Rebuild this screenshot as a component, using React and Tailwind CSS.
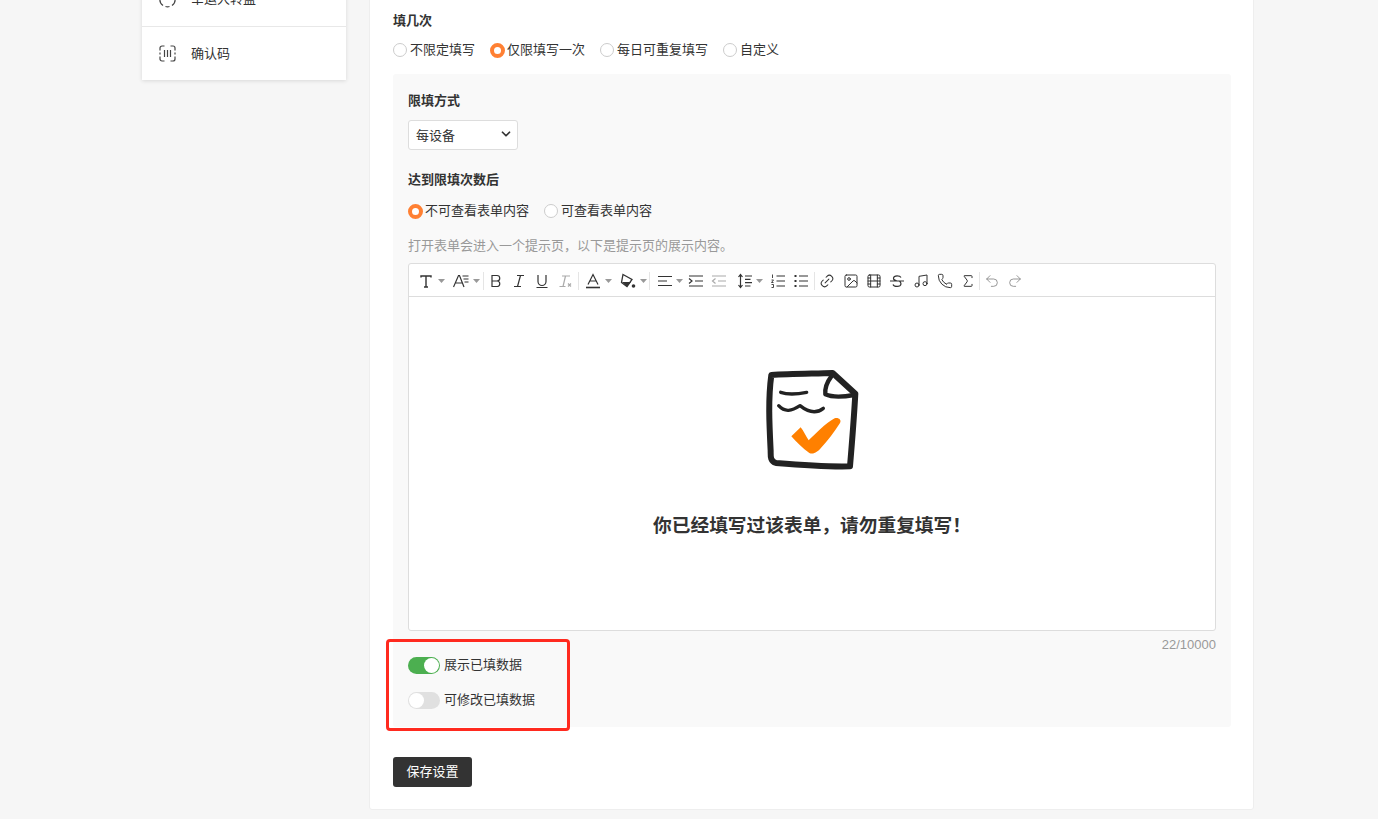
import React from 'react';
import { Link2, Image, Film, Music, Phone, Sigma, Undo2, Redo2, ChevronDown } from 'lucide-react';

const Radio = ({ checked, label }) => (
  <label className="flex items-center">
    {checked ? (
      <>
        <span className="w-[15px] h-[15px] rounded-full border-[4px] border-[#ff8033] bg-white" />
        <span className="ml-[2px]">{label}</span>
      </>
    ) : (
      <>
        <span className="w-[14px] h-[14px] rounded-full border border-[#ccc] bg-white" />
        <span className="ml-[3px]">{label}</span>
      </>
    )}
  </label>
);

const Caret = () => (
  <svg width="7" height="4" viewBox="0 0 7 4" className="shrink-0">
    <path d="M0 0h7L3.5 4z" fill="#999" />
  </svg>
);

const Divider = () => <span className="w-px h-[18px] bg-[#e5e5e5] shrink-0" />;

const Glyph = ({ children, muted }) => (
  <svg
    width="16"
    height="16"
    viewBox="0 0 16 16"
    fill="none"
    stroke={muted ? '#aaa' : '#333'}
    strokeWidth="1.2"
  >
    {children}
  </svg>
);

const Tool = ({ children }) => (
  <span className="w-[23px] h-[20px] flex items-center justify-center shrink-0">{children}</span>
);

const icon = { size: 16, strokeWidth: 1.5, color: '#333' };

const Toolbar = () => (
  <div className="h-[33px] border-b border-[#ddd] flex items-center pl-[5px] pt-[2px]">
    <span className="w-[35px] flex items-center shrink-0">
      <Tool>
        <Glyph><path d="M3 4.500V3h10v1.500M8 3v11M6 14h4" strokeWidth="1.400" /></Glyph>
      </Tool>
      <span className="ml-[1px]"><Caret /></span>
    </span>
    <span className="w-[34px] flex items-center shrink-0">
      <Tool>
        <Glyph><path d="M0.500 14 5.500 2.500h1L11 14M2.500 10h7M9.500 3h6M10.500 6h5M11.500 9h4" /></Glyph>
      </Tool>
      <span className="ml-[1px]"><Caret /></span>
    </span>
    <Divider />
    <Tool><Glyph><path d="M4 2.500h5a2.700 2.700 0 0 1 0 5.500H4zM4 8h5.500a2.800 2.800 0 0 1 0 5.500H4z" /></Glyph></Tool>
    <Tool><Glyph><path d="M6 2.500h7M3 13.500h7M9.500 2.500l-3 11" /></Glyph></Tool>
    <Tool><Glyph><path d="M4 2v6.500a4 4 0 0 0 8 0V2M2.500 14.500h11" /></Glyph></Tool>
    <Tool><Glyph muted><path d="M5 3h8M2.500 13.500h6M8.500 3l-2.500 10.500M11 10.500l3 3M14 10.500l-3 3" /></Glyph></Tool>
    <span className="w-[2px] shrink-0" />
    <Divider />
    <span className="w-[2px] shrink-0" />
    <span className="w-[35px] flex items-center shrink-0">
      <Tool>
        <Glyph><path d="M3 11.500 8 1.500l5 10M4.800 8h6.400" /><path d="M1 14.500h14" strokeWidth="1.600" /></Glyph>
      </Tool>
      <span className="ml-[1px]"><Caret /></span>
    </span>
    <span className="w-[33px] flex items-center shrink-0">
      <Tool>
        <svg width="16" height="16" viewBox="0 0 16 16">
          <path d="M3 1.500 12 6.500 7 13.500 1.500 9.500z" fill="none" stroke="#333" strokeWidth="1.300" />
          <path d="M2 9h9L7 13.500z" fill="#333" />
          <circle cx="13.500" cy="13" r="1.800" fill="#333" />
        </svg>
      </Tool>
      <span className="ml-[1px]"><Caret /></span>
    </span>
    <Divider />
    <span className="w-[3px] shrink-0" />
    <span className="w-[31px] flex items-center shrink-0">
      <Tool>
        <Glyph><path d="M1 3.500h14M1 8h9M1 12.500h14" /></Glyph>
      </Tool>
      <Caret />
    </span>
    <Tool><Glyph><path d="M1 3h14M7 8h8M1 13h14M1 5.500 4 8l-3 2.500" /></Glyph></Tool>
    <Tool><Glyph muted><path d="M1 3h14M7 8h8M1 13h14M4.500 5.500 1.500 8l3 2.500" /></Glyph></Tool>
    <span className="w-[3px] shrink-0" />
    <span className="w-[33px] flex items-center shrink-0">
      <Tool>
        <Glyph><path d="M3.500 1.500v13M1.500 4l2-2.500 2 2.500M1.500 12l2 2.500 2-2.500M8 3h7M8 6.300h5.500M8 9.600h7M8 13h5.500" /></Glyph>
      </Tool>
      <Caret />
    </span>
    <Tool><Glyph><path d="M6.500 3h8.500M6.500 8h8.500M6.500 13h8.500" /><path d="M2.500 1.500v3.500M1.500 7h2L1.500 9.500h2M1.500 11.500h2v3h-2" strokeWidth="0.900" /></Glyph></Tool>
    <Tool><Glyph><path d="M6 3h9M6 8h9M6 13h9" /><path d="M1.500 3h2M1.500 8h2M1.500 13h2" strokeWidth="1.800" /></Glyph></Tool>
    <span className="w-[2px] shrink-0" />
    <Divider />
    <Tool><Link2 {...icon} className="-rotate-45" /></Tool>
    <span className="w-px shrink-0" />
    <Tool><Image {...icon} /></Tool>
    <Tool><Film {...icon} /></Tool>
    <Tool><Glyph><path d="M1 8h14M12 4.500C11 2.500 5 2 4.500 5c-.3 2 2 2.600 3.500 3M4 11.500c1 2.500 7.500 2.800 8-.5 0-1-.5-2-1.500-3" /></Glyph></Tool>
    <span className="w-px shrink-0" />
    <Tool><Music {...icon} /></Tool>
    <span className="w-px shrink-0" />
    <Tool><Phone {...icon} /></Tool>
    <Tool><Sigma {...icon} /></Tool>
    <Divider />
    <Tool><Undo2 size={16} strokeWidth={1.300} color="#888" /></Tool>
    <Tool><Redo2 size={16} strokeWidth={1.300} color="#888" /></Tool>
  </div>
);

const DoneIllustration = () => (
  <svg width="120" height="115" viewBox="0 0 360 345" className="mr-[5px]">
    <g fill="none" stroke="#222" strokeLinecap="round" strokeLinejoin="round">
      <path
        d="M64 42C120 38 190 38 248 36L316 98C312 170 306 245 300 316C225 318 150 312 78 306C60 300 62 285 62 270C58 190 54 115 64 42Z"
        strokeWidth="18"
      />
      <path d="M244 46C232 62 224 82 226 100C248 110 280 108 312 102" strokeWidth="13" />
      <path d="M92 94C115 102 140 100 170 94" strokeWidth="10" />
      <path d="M86 134C105 155 125 150 150 134C170 150 195 162 220 142" strokeWidth="10" />
    </g>
    <path
      d="M124 226 152 199C160 208 168 226 176 238C198 218 224 188 254 172C264 168 276 176 270 186C254 212 232 240 212 262C204 272 190 282 178 276C158 262 140 244 124 226Z"
      fill="#ff8000"
    />
  </svg>
);

const App = () => (
  <div className="h-[819px] overflow-hidden bg-[#f6f6f6] flex items-start pl-[142px] text-[13px] text-[#333] font-['Liberation_Sans','Noto_Sans_CJK_SC',sans-serif]">
    <div className="w-[204px] -mt-[28px] bg-white shadow-[0_1px_4px_rgba(0,0,0,0.12)] shrink-0">
      <div className="h-[55px] border-b border-[#e8e8e8] flex items-center pl-[17px]">
        <svg width="17" height="17" viewBox="0 0 17 17" fill="none" stroke="#444" strokeWidth="1.200">
          <path d="M4 2.500a7.300 7.300 0 0 1 9 0M15.500 6a7.300 7.300 0 0 1-2.500 8.500M4 14.500A7.300 7.300 0 0 1 1.500 6" />
          <path d="M6.500 15.500a7.300 7.300 0 0 0 4 0" />
        </svg>
        <span className="ml-[15px]">幸运大转盘</span>
      </div>
      <div className="h-[53px] flex items-center pl-[17px]">
        <svg width="17" height="17" viewBox="0 0 17 17" fill="none" stroke="#444" strokeWidth="1.200">
          <path d="M5.500 1H3a2 2 0 0 0-2 2v2.500M11.500 1H14a2 2 0 0 1 2 2v2.500M5.500 16H3a2 2 0 0 1-2-2v-2.500M11.500 16H14a2 2 0 0 0 2-2v-2.500M1 7.500v2M16 7.500v2M5.500 5v7M8.500 5v7M11.500 5v7" />
        </svg>
        <span className="ml-[15px]">确认码</span>
      </div>
    </div>

    <div className="relative w-[885px] ml-[23px] -mt-[10px] bg-white border border-[#eee] rounded-[3px] pt-[20px] px-[23px] pb-[22px] shrink-0">
      <div className="font-bold leading-[19px]">填几次</div>
      <div className="flex items-center gap-[15px] mt-[11px] h-[18px] leading-[18px]">
        <Radio label="不限定填写" />
        <Radio checked label="仅限填写一次" />
        <Radio label="每日可重复填写" />
        <Radio label="自定义" />
      </div>

      <div className="mt-[15px] w-[838px] bg-[#f9f9f9] rounded-[3px] px-[15px] pt-[17px] pb-[18px]">
        <div className="font-bold leading-[20px]">限填方式</div>
        <div className="relative mt-[9px] w-[110px]">
          <select
            defaultValue="device"
            className="block w-full h-[30px] appearance-none bg-white border border-[#ddd] rounded-[3px] px-[7px] pt-[1px] text-[13px] text-[#333]"
          >
            <option value="device">每设备</option>
          </select>
          <ChevronDown size={14} strokeWidth={3} color="#333" className="absolute right-[5px] top-[7px] pointer-events-none" />
        </div>

        <div className="font-bold leading-[20px] mt-[20px]">达到限填次数后</div>
        <div className="flex items-center gap-[15px] mt-[12px] h-[18px] leading-[18px]">
          <Radio checked label="不可查看表单内容" />
          <Radio label="可查看表单内容" />
        </div>
        <div className="mt-[16px] leading-[20px] text-[#999]">打开表单会进入一个提示页，以下是提示页的展示内容。</div>

        <div className="mt-[7px] h-[368px] bg-white border border-[#ddd] rounded-[3px]">
          <Toolbar />
          <div className="flex flex-col items-center pt-[64px]">
            <DoneIllustration />
            <div className="mt-[36px] text-[18.72px] leading-[28px] font-bold">你已经填写过该表单，请勿重复填写！</div>
          </div>
        </div>
        <div className="mt-[4px] leading-[20px] text-right text-[#999]">22/10000</div>

        <div className="mt-[1px] h-[18px] flex items-center">
          <span className="relative w-[32px] h-[17px] rounded-full bg-[#4caf50]">
            <span className="absolute right-[1px] top-[1px] w-[15px] h-[15px] rounded-full bg-white" />
          </span>
          <span className="ml-[4px]">展示已填数据</span>
        </div>
        <div className="mt-[17px] h-[18px] flex items-center">
          <span className="relative w-[32px] h-[17px] rounded-full bg-[#e0e0e0]">
            <span className="absolute left-[1px] top-[1px] w-[15px] h-[15px] rounded-full bg-white" />
          </span>
          <span className="ml-[4px]">可修改已填数据</span>
        </div>
      </div>

      <button className="block mt-[30px] w-[79px] h-[30px] bg-[#333] text-white rounded-[3px] text-[13px]">保存设置</button>

      <div className="absolute left-[16px] top-[648px] w-[184px] h-[92px] border-[3px] border-[#ff2a1f] rounded-[4px]" />
    </div>
  </div>
);

export default App;
